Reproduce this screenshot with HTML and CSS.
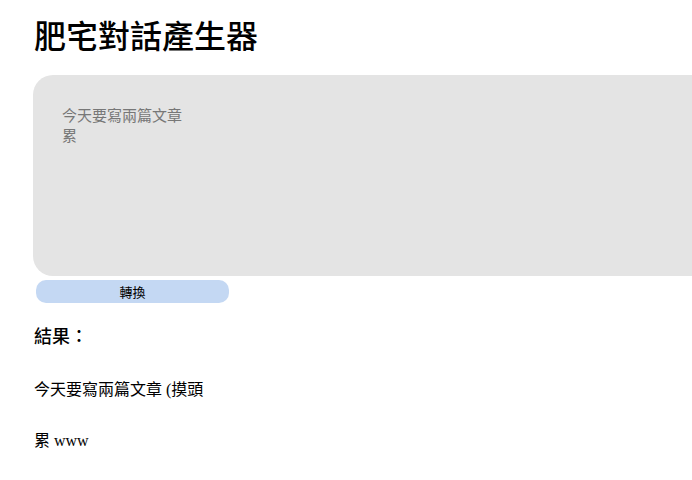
FILE: index.html
```html
<!DOCTYPE html>
<html lang="zh-Hant">
<head>
<meta charset="utf-8">
<title>肥宅對話產生器</title>
<link rel="stylesheet" href="styles.css">
</head>
<body>
<main class="page">
  <h1 class="title">肥宅對話產生器</h1>
  <textarea class="input" readonly>今天要寫兩篇文章
累</textarea>
  <button class="convert" type="button">轉換</button>
  <h3 class="result-label">結果：</h3>
  <p class="result-line">今天要寫兩篇文章 (摸頭</p>
  <p class="result-line">累 www</p>
</main>
</body>
</html>
```

FILE: styles.css
```css
html, body {
  margin: 0;
  padding: 0;
  overflow: hidden;
  background: #ffffff;
}

.page {
  padding: 11px 0 0 33px;
  display: flex;
  flex-direction: column;
  align-items: flex-start;
  font-family: "Liberation Serif", "Noto Sans CJK TC", serif;
  color: #000;
}

.title {
  margin: 0 0 0 1px;
  font-family: "Noto Sans CJK TC", sans-serif;
  font-size: 32px;
  font-weight: 500;
  line-height: 46px;
}

.input {
  box-sizing: border-box;
  margin: 18px 0 0 0;
  width: 680px;
  height: 201px;
  padding: 30px 29px;
  border: none;
  border-radius: 20px;
  background: #e4e4e4;
  color: #777777;
  font-family: "Noto Sans CJK TC", sans-serif;
  font-size: 15px;
  line-height: 20px;
  resize: none;
  outline: none;
  overflow: hidden;
}

.convert {
  margin: 4px 0 0 3px;
  width: 193px;
  height: 23px;
  padding: 0;
  border: none;
  border-radius: 10px;
  background: #c4d8f3;
  color: #000;
  font-family: "Noto Sans CJK TC", sans-serif;
  font-size: 13px;
  line-height: 23px;
}

.result-label {
  margin: 19px 0 0 1px;
  font-family: "Noto Sans CJK TC", sans-serif;
  font-size: 18px;
  font-weight: 500;
  line-height: 26px;
}

.result-line {
  margin: 31px 0 0 1px;
  font-size: 16px;
  line-height: 22px;
}

.result-line + .result-line {
  margin-top: 29px;
}
```
